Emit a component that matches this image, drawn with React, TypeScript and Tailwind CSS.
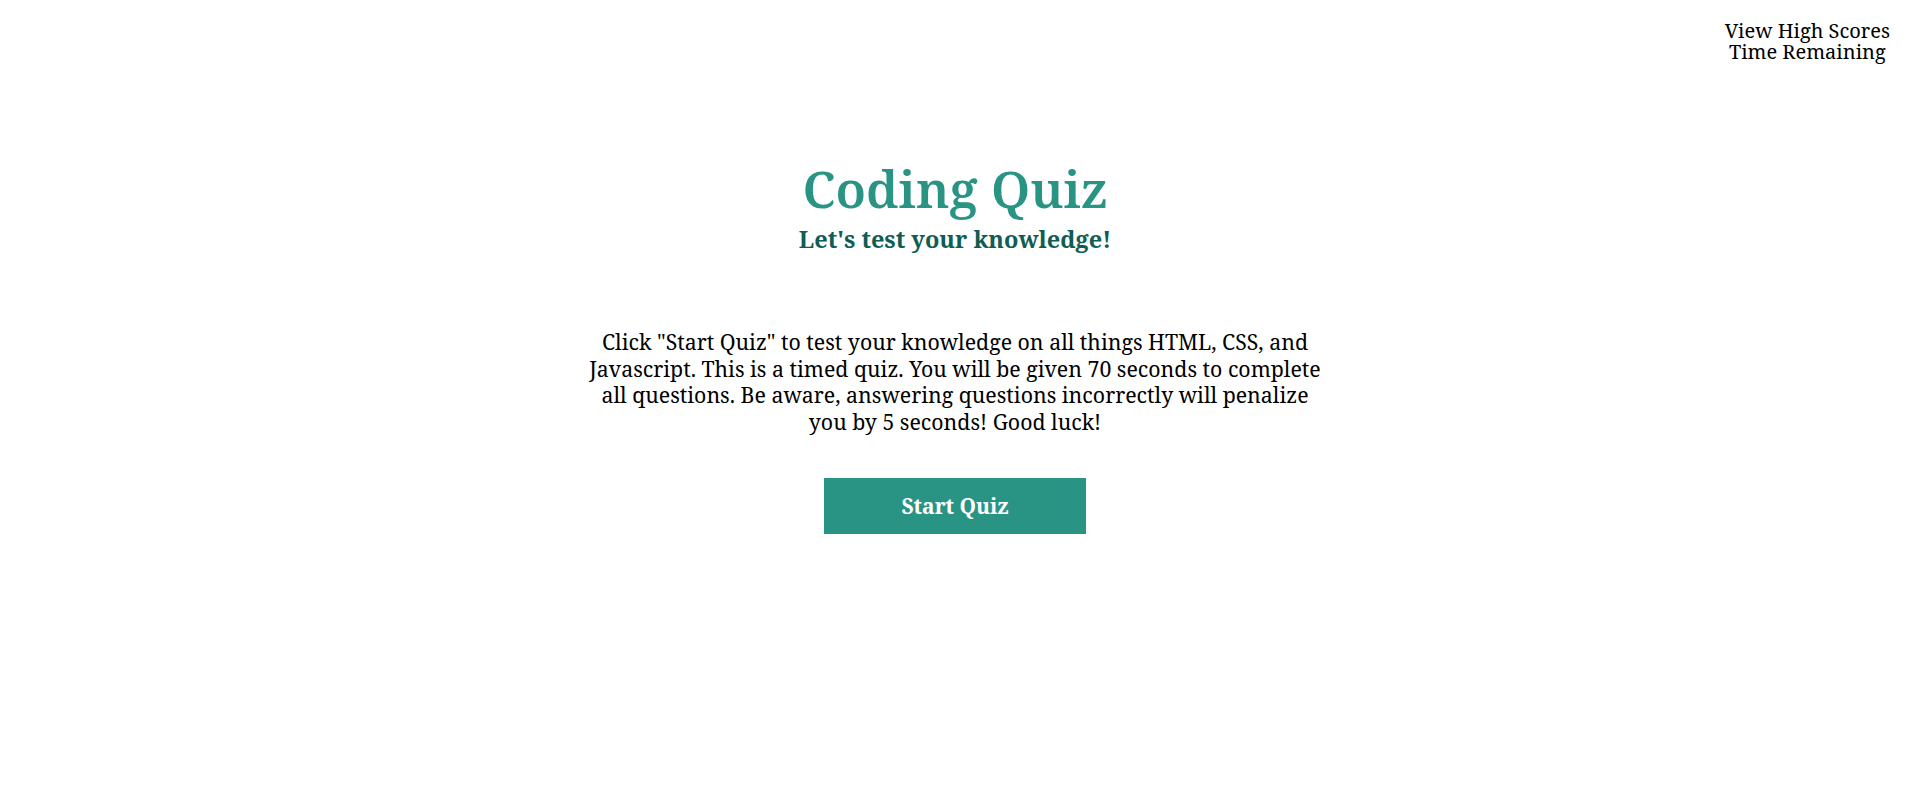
export default function App() {
  return (
    <div className="min-h-screen bg-white text-black font-['Noto_Serif','DejaVu_Serif',serif]">
      {/* Top right links */}
      <header className="flex justify-end px-5 pt-5">
        <div className="flex flex-col items-center text-[20px] leading-[21px]">
          <a href="#" className="text-black">View High Scores</a>
          <span>Time Remaining</span>
        </div>
      </header>

      <main className="flex flex-col items-center pt-[92px]">
        <h1 className="text-[51px] leading-[1.362] font-semibold text-[#2a9484]">Coding Quiz</h1>
        <h2 className="text-[23.5px] leading-[1.362] font-bold text-[#0f5e54]">Let's test your knowledge!</h2>

        <p className="mt-[74px] w-[745px] text-center text-[21.3px] leading-[26.5px]">
          Click "Start Quiz" to test your knowledge on all things HTML, CSS, and Javascript. This is a
          timed quiz. You will be given 70 seconds to complete all questions. Be aware, answering
          questions incorrectly will penalize you by 5 seconds! Good luck!
        </p>

        <button
          type="button"
          className="mt-[43px] flex h-[56px] w-[262px] items-center justify-center bg-[#2a9484] text-[21px] font-bold text-white"
        >
          Start Quiz
        </button>
      </main>
    </div>
  );
}
